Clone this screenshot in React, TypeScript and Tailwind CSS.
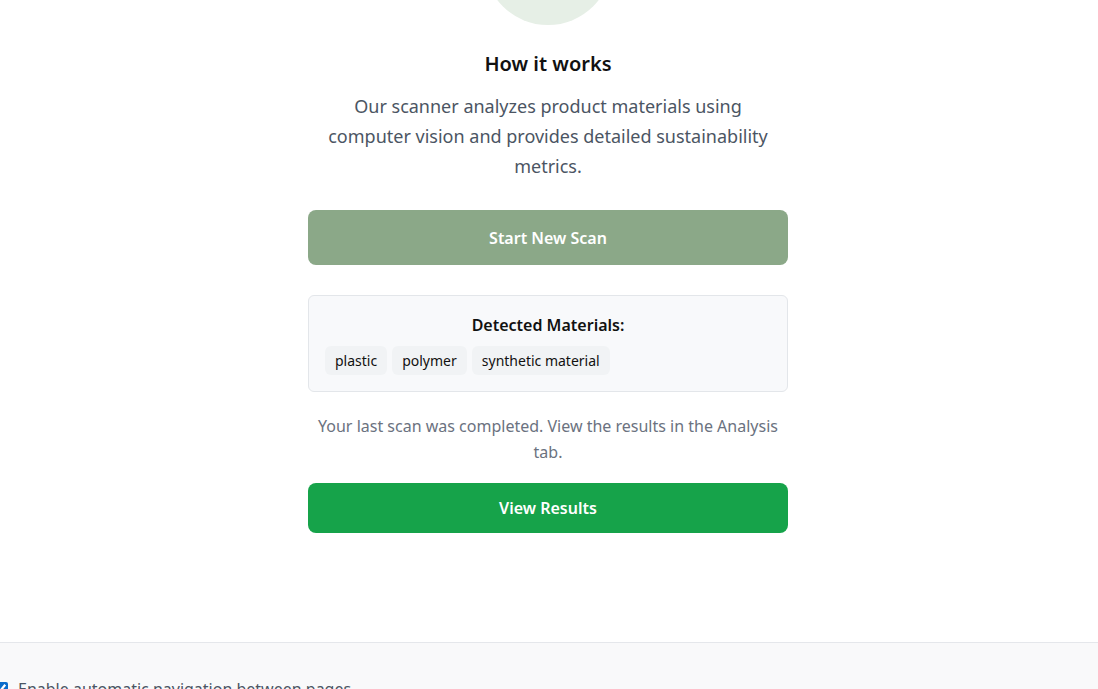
import React, { useState } from 'react';

const font = { fontFamily: '"Noto Sans", "Open Sans", sans-serif' };

function MaterialTag({ label }: { label: string }) {
    return (
        <span className="flex h-[29px] items-center rounded-md bg-[#f1f3f5] px-2.5 text-sm leading-5 text-[#111]">
            {label}
        </span>
    );
}

export default function App() {
    const [autoNav, setAutoNav] = useState(true);
    const materials = ['plastic', 'polymer', 'synthetic material'];

    return (
        <div className="min-h-screen w-full overflow-hidden bg-white font-['Noto_Sans',sans-serif]">
            <main className="flex flex-col items-center pr-[2px] pb-[109px]">
                {/* scan illustration, scrolled partly out of view */}
                <div className="-mt-[103px] h-32 w-32 rounded-full bg-[#e6efe6]" />

                <div className="mt-[25px] flex w-[480px] flex-col items-center text-center">
                    <h2 className="text-xl font-semibold leading-7 text-[#111]">How it works</h2>
                    <p className="mt-[13px] px-2 text-lg leading-[30px] text-[#4b5563]">
                        Our scanner analyzes product materials using computer vision and provides detailed sustainability metrics.
                    </p>

                    <button className="mt-[29px] h-[55px] w-full rounded-lg bg-[#8ba888] text-base font-semibold text-white">
                        Start New Scan
                    </button>

                    <div className="mt-[30px] w-full rounded-md border border-[#e3e6ea] bg-[#f8f9fb] px-4 pt-[17px] pb-4">
                        <h3 className="text-base font-semibold leading-6 text-[#111]">Detected Materials:</h3>
                        <div className="mt-[9px] flex flex-wrap gap-[5px]">
                            {materials.map((m) => (
                                <MaterialTag key={m} label={m} />
                            ))}
                        </div>
                    </div>

                    <p className="mt-[21px] text-base leading-[26px] text-[#6b7280]">
                        Your last scan was completed. View the results in the Analysis tab.
                    </p>

                    <button className="mt-[18px] h-[50px] w-full rounded-lg bg-[#16a34a] text-base font-semibold text-white">
                        View Results
                    </button>
                </div>
            </main>

            <footer className="border-t border-[#e5e7eb] bg-[#f9f9fa] pt-[34px] pb-6" style={font}>
                <label className="-ml-[6px] flex items-center gap-[10px] text-base text-[#4b5563]">
                    <input
                        type="checkbox"
                        checked={autoNav}
                        onChange={(e) => setAutoNav(e.target.checked)}
                        className="h-[14px] w-[14px] accent-[#0b6bcb]"
                    />
                    Enable automatic navigation between pages
                </label>
            </footer>
        </div>
    );
}
